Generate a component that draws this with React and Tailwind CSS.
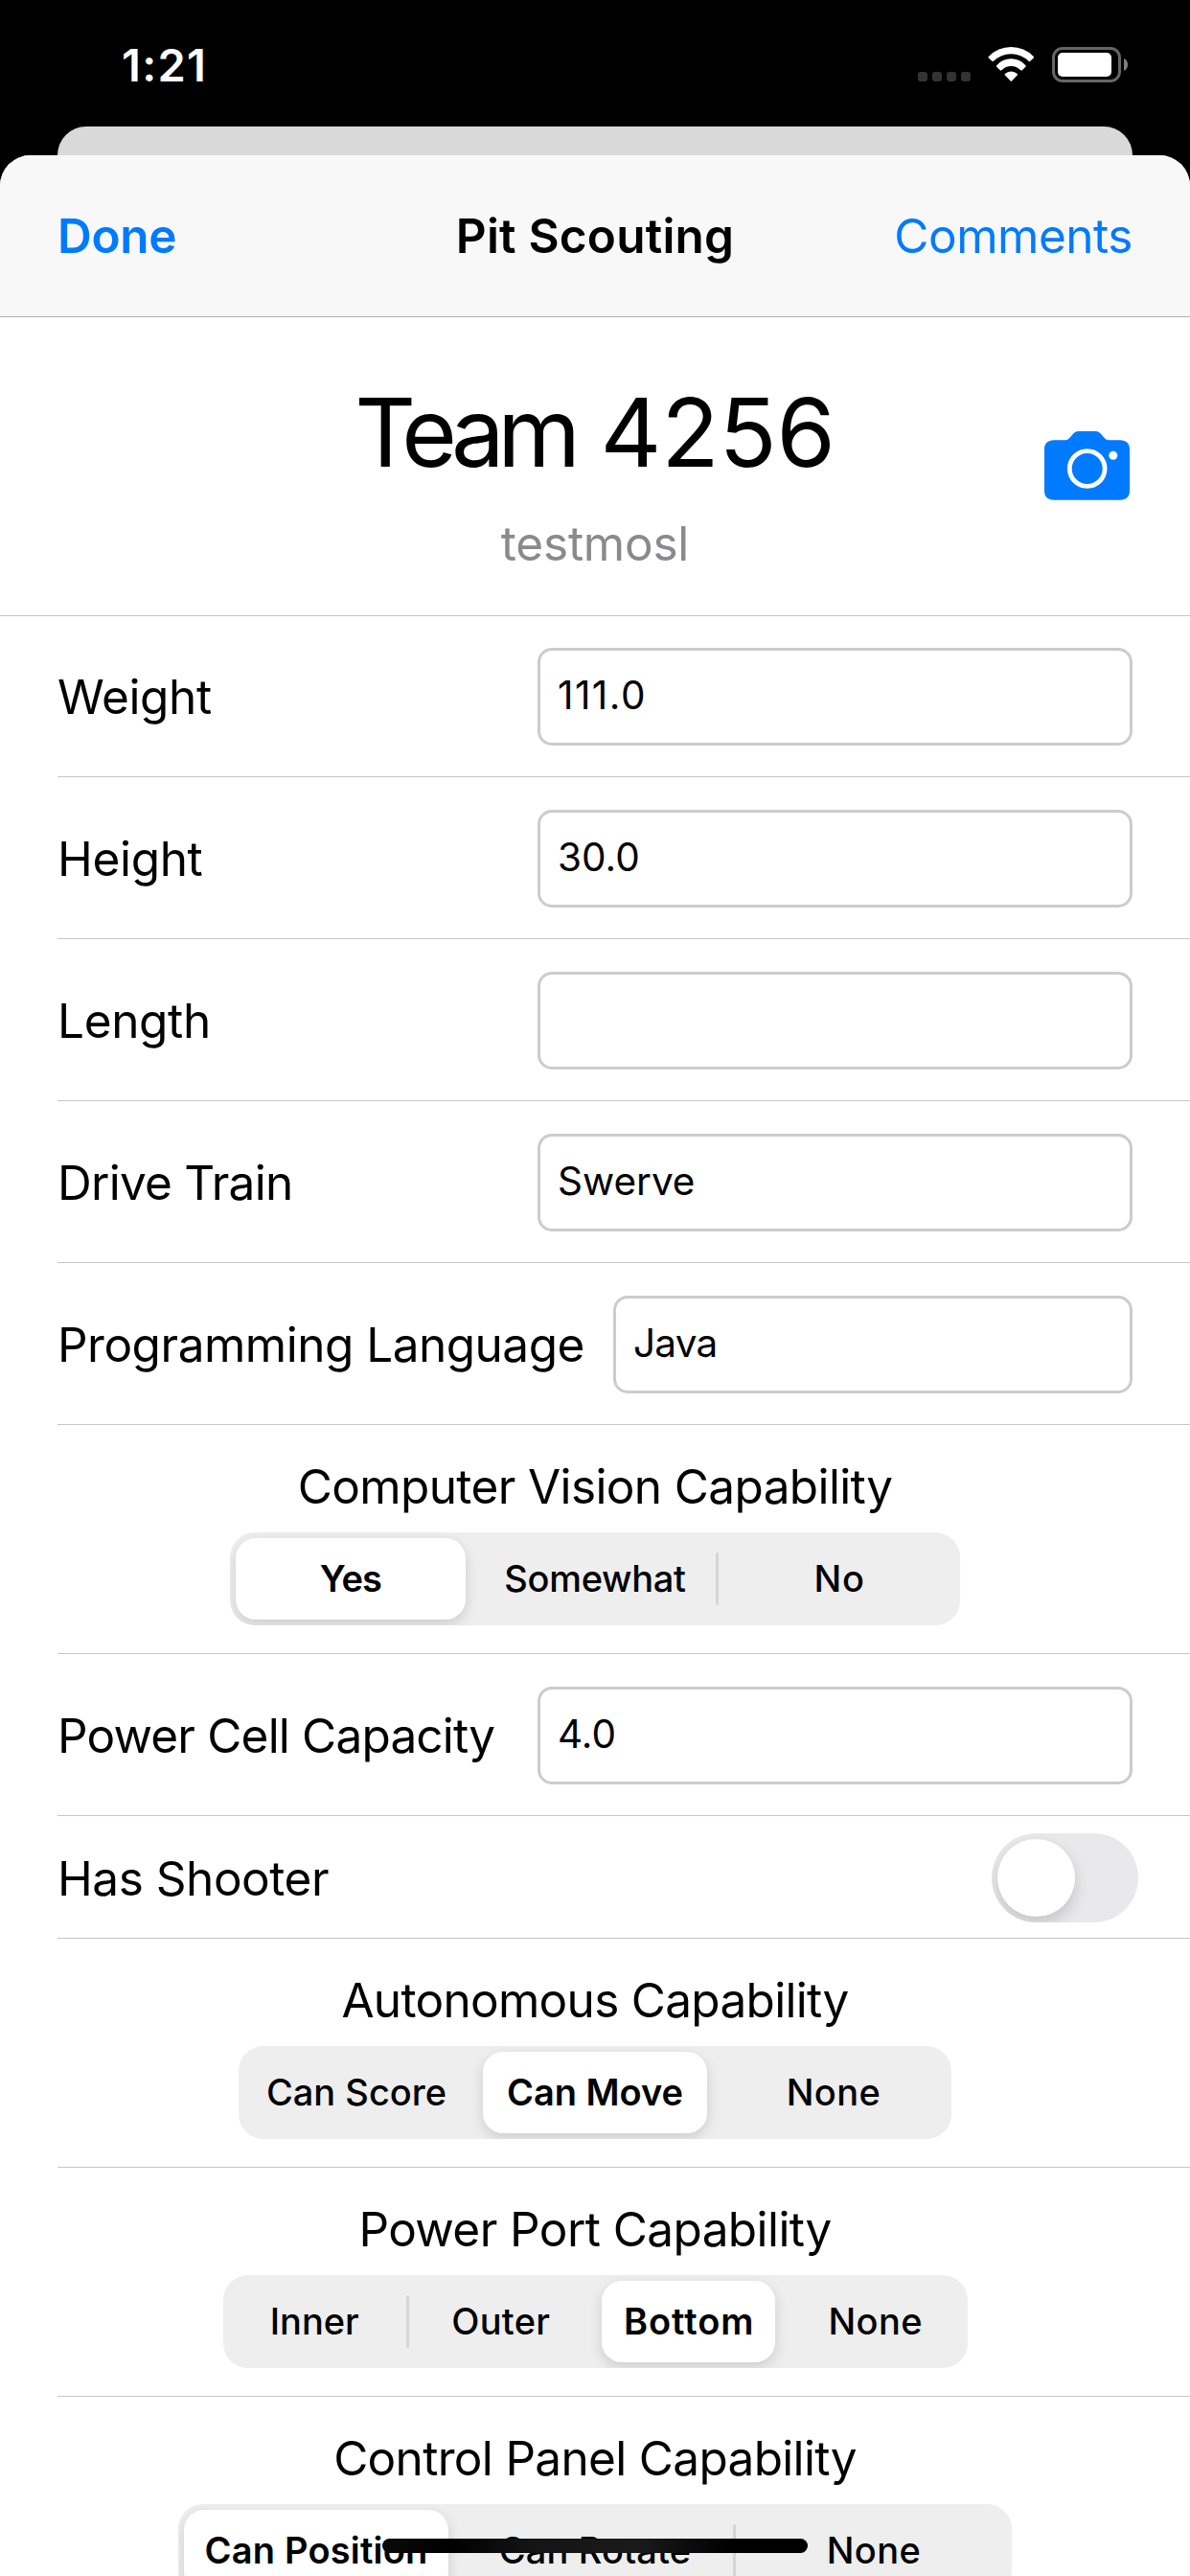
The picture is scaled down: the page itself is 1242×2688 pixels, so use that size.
import React, { useState } from "react";
import clsx from "clsx";

const LABEL = "text-[49.5px] leading-[60px] whitespace-nowrap";

function StatusBar() {
  return (
    <div className="flex h-[132px] items-start justify-between pl-[127px] pr-[64px] text-white">
      <span className="mt-[39px] text-[47px] leading-[57px] font-semibold tracking-[0.027em]">
        1:21
      </span>
      <div className="mt-[48px] flex items-start">
        <div className="mt-[27px] mr-[18px] flex gap-[5px]">
          {[0, 1, 2, 3].map((i) => (
            <span key={i} className="size-[10px] rounded-[3px] bg-[#333333]" />
          ))}
        </div>
        <svg className="mr-[17px]" width="49" height="38" viewBox="0 0 49 38" fill="#fff">
          <path d="M.9 10.9A32.4 32.4 0 0 1 47.7 10.9Q48.6 11.6 47.8 12.4L44.2 15.8Q43.4 16.5 42.6 15.8A26 26 0 0 0 6 15.8Q5.2 16.5 4.4 15.8L.8 12.4Q0 11.6.9 10.9Z" />
          <path d="M9.2 20.2A19.9 19.9 0 0 1 39.4 20.2Q40.1 20.9 39.4 21.7L35.8 25.2Q35 25.9 34.2 25.2A13.6 13.6 0 0 0 14.4 25.2Q13.6 25.9 12.8 25.2L9.2 21.7Q8.5 20.9 9.2 20.2Z" />
          <path d="M17.9 29.1A9.4 9.4 0 0 1 30.7 29.1Q31.5 29.8 30.7 30.5L24.9 36.6Q24.3 37.2 23.7 36.6L17.9 30.5Q17.1 29.8 17.9 29.1Z" />
        </svg>
        <svg width="81" height="39" viewBox="0 0 81 39">
          <rect x="2.5" y="2.5" width="69" height="34" rx="9.5" fill="none" stroke="#666" strokeWidth="3" />
          <rect x="7" y="7" width="56" height="25" rx="5" fill="#fff" />
          <path d="M76 13C79 14.3 80 17 80 19.5C80 22 79 24.7 76 26Z" fill="#808080" />
        </svg>
      </div>
    </div>
  );
}

function NavBar() {
  return (
    <div className="grid h-[169px] grid-cols-[1fr_auto_1fr] items-center border-b border-[#b2b2b3] bg-[#f8f8f8] px-[60px] text-[49.5px] leading-[60px]">
      <button className="justify-self-start font-semibold tracking-[-0.006em] text-[#007aff]">Done</button>
      <h1 className="font-semibold tracking-[0.004em]">Pit Scouting</h1>
      <button className="justify-self-end tracking-[-0.0095em] text-[#007aff]">Comments</button>
    </div>
  );
}

function CameraIcon() {
  return (
    <svg width="89" height="72" viewBox="0 0 89 72">
      <path
        d="M10 9.2H21.5C24 9.2 25.3 8.3 27 6.3L29.8 3C31.5 1 33 0 36 0H53C56 0 57.5 1 59.2 3L62 6.3C63.7 8.3 65 9.2 67.5 9.2H79C85.5 9.2 89 12.7 89 19V62C89 68.3 85.5 71.7 79 71.7H10C3.5 71.7 0 68.3 0 62V19C0 12.7 3.5 9.2 10 9.2Z"
        fill="#007aff"
      />
      <circle cx="44.7" cy="39" r="18.4" fill="none" stroke="#fff" strokeWidth="4.8" />
      <circle cx="71.8" cy="25.3" r="4.5" fill="#fff" />
    </svg>
  );
}

function TeamHeader() {
  return (
    <div className="relative flex h-[312px] flex-col items-center border-b border-[#c6c6c8] pt-[60px]">
      <h2 className="text-[99px] leading-[120px] whitespace-nowrap">
        <span className="tracking-[-0.072em]">Team</span>
        <span className="tracking-[-0.002em]"> 4256</span>
      </h2>
      <p className="mt-[26px] text-[49.5px] leading-[60px] tracking-[-0.0045em] text-[#8a8a8e]">testmosl</p>
      <button className="absolute top-[119px] right-[63px]" aria-label="Camera">
        <CameraIcon />
      </button>
    </div>
  );
}

function FieldRow({ label, value, labelClass, valueClass, wide = true }) {
  return (
    <div className="ml-[60px] flex h-[169px] items-center justify-between border-b border-[#c6c6c8] pt-[2px] pr-[60px]">
      <span className={clsx(LABEL, labelClass)}>{label}</span>
      <div
        className={clsx(
          "flex h-[102px] items-center rounded-[15px] border-[3px] border-[#cccccc] pb-[3px] pl-[18px]",
          wide ? "w-[621px]" : "w-[542px]"
        )}
      >
        <span className={clsx("text-[40.5px] leading-[49px]", valueClass)}>{value}</span>
      </div>
    </div>
  );
}

function SegmentRow({ title, titleClass, width, options, initial }) {
  const [selected, setSelected] = useState(initial);
  return (
    <div className="ml-[60px] flex h-[239px] flex-col items-center border-b border-[#c6c6c8] pt-[34px] pr-[60px]">
      <span className={clsx(LABEL, titleClass)}>{title}</span>
      <div className={clsx("mt-[18px] flex h-[97px] shrink-0 items-center overflow-hidden rounded-[26px] bg-[#eeeeee] px-[6px]", width)}>
        {options.map(({ text, track }, i) => (
          <React.Fragment key={text}>
            {i > 0 && (
              <span
                className={clsx(
                  "mx-[6px] h-[55px] w-[3px] shrink-0 rounded-full",
                  selected === i || selected === i - 1 ? "bg-transparent" : "bg-[#d5d5d6]"
                )}
              />
            )}
            <button
              onClick={() => setSelected(i)}
              className={clsx(
                "flex h-[85px] min-w-0 flex-1 basis-0 items-center justify-center rounded-[21px] pb-px text-[38px] leading-[46px] whitespace-nowrap",
                track,
                selected === i
                  ? "bg-white font-semibold shadow-[0_5px_14px_rgba(0,0,0,0.14)]"
                  : "font-medium"
              )}
            >
              {text}
            </button>
          </React.Fragment>
        ))}
      </div>
    </div>
  );
}

function SwitchRow({ label, labelClass }) {
  return (
    <div className="ml-[60px] flex h-[128px] items-center justify-between border-b border-[#c6c6c8] pt-[2px] pr-[54px]">
      <span className={clsx(LABEL, labelClass)}>{label}</span>
      <div className="flex h-[93px] w-[153px] items-center overflow-hidden rounded-full bg-[#e9e9eb] px-[6px]">
        <span className="size-[81px] rounded-full bg-white shadow-[0_7px_16px_rgba(0,0,0,0.16)]" />
      </div>
    </div>
  );
}

export default function App() {
  return (
    <div className="relative h-[2688px] w-[1242px] overflow-hidden bg-black font-['Inter',sans-serif] text-black">
      <StatusBar />
      <div className="mx-[60px] h-[30px] rounded-t-[30px] bg-[#d9d9d9]" />
      <div className="h-[2526px] overflow-hidden rounded-t-[32px] bg-white">
        <NavBar />
        <TeamHeader />
        <div className="-mt-px">
          <FieldRow label="Weight" labelClass="tracking-[-0.007em]" value="111.0" valueClass="tracking-[0.036em]" />
          <FieldRow label="Height" labelClass="tracking-[-0.0067em]" value="30.0" />
          <FieldRow label="Length" labelClass="tracking-[-0.0067em]" value="" />
          <FieldRow label="Drive Train" labelClass="tracking-[-0.015em]" value="Swerve" />
          <FieldRow
            label="Programming Language"
            labelClass="tracking-[-0.01em]"
            value="Java"
            valueClass="tracking-[-0.02em]"
            wide={false}
          />
          <SegmentRow
            title="Computer Vision Capability"
            titleClass="tracking-[-0.0125em]"
            width="w-[762px]"
            initial={0}
            options={[
              { text: "Yes", track: "tracking-[-0.02em]" },
              { text: "Somewhat", track: "tracking-[-0.008em]" },
              { text: "No", track: "tracking-[0.02em]" },
            ]}
          />
          <FieldRow label="Power Cell Capacity" labelClass="tracking-[-0.0165em]" value="4.0" />
          <SwitchRow label="Has Shooter" labelClass="tracking-[-0.0093em]" />
          <SegmentRow
            title="Autonomous Capability"
            titleClass="tracking-[-0.0142em]"
            width="w-[744px]"
            initial={1}
            options={[
              { text: "Can Score", track: "tracking-normal" },
              { text: "Can Move", track: "tracking-normal" },
              { text: "None", track: "tracking-[0.012em]" },
            ]}
          />
          <SegmentRow
            title="Power Port Capability"
            titleClass="tracking-[-0.0118em]"
            width="w-[777px]"
            initial={2}
            options={[
              { text: "Inner", track: "tracking-normal" },
              { text: "Outer", track: "tracking-[0.007em]" },
              { text: "Bottom", track: "tracking-[0.024em] pl-[2px]" },
              { text: "None", track: "tracking-[0.012em]" },
            ]}
          />
          <SegmentRow
            title="Control Panel Capability"
            titleClass="tracking-[-0.0136em]"
            width="w-[870px]"
            initial={0}
            options={[
              { text: "Can Position", track: "tracking-[0.005em]" },
              { text: "Can Rotate", track: "tracking-[0.0036em]" },
              { text: "None", track: "tracking-[0.012em]" },
            ]}
          />
        </div>
      </div>
      <div className="absolute bottom-[24px] left-[399px] h-[15px] w-[444px] rounded-full bg-[linear-gradient(90deg,#0a0a0a_0%,#000_16%,#141414_35%,#1a1a1a_60%,#000_82%)]" />
    </div>
  );
}
